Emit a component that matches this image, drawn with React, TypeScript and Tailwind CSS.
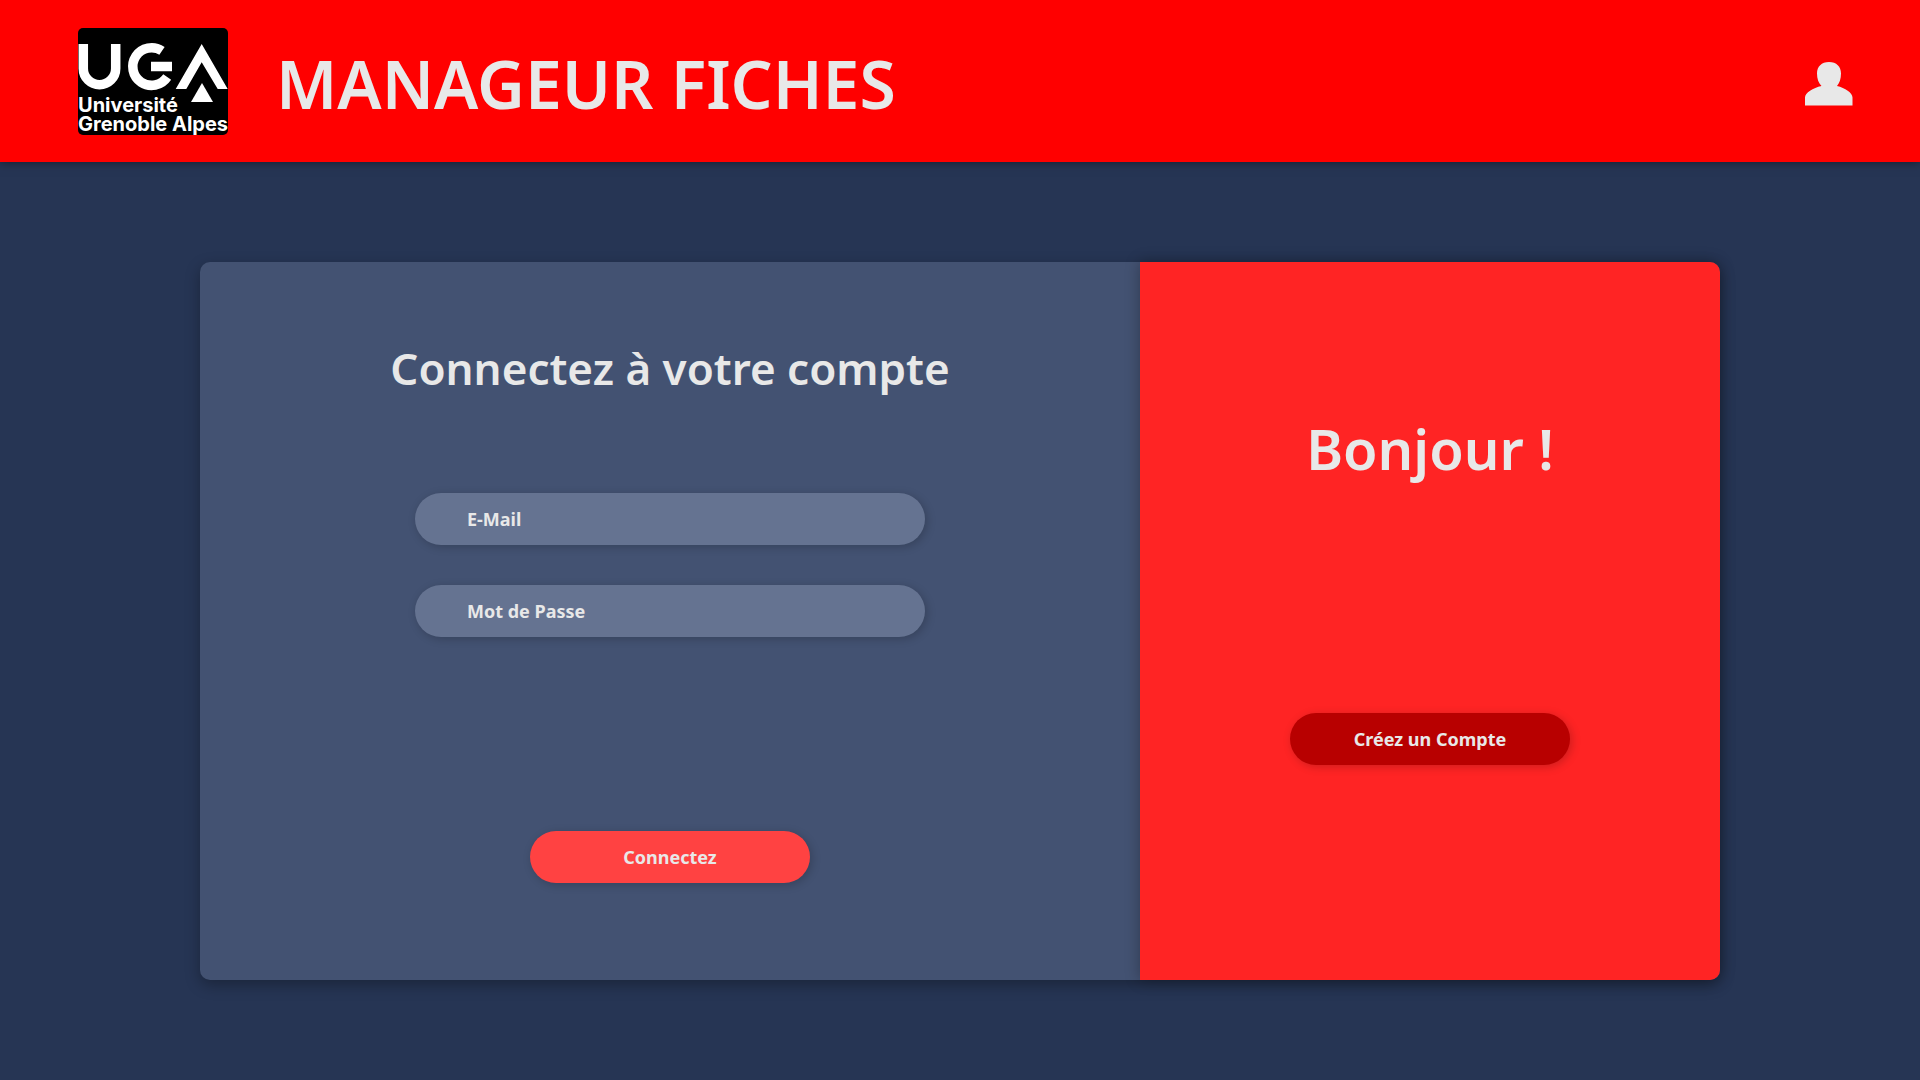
import React from "react";

function UgaLogo() {
  return (
    <svg
      role="img"
      aria-label="Université Grenoble Alpes"
      viewBox="0 0 150 107"
      className="h-[107px] w-[150px] shrink-0 rounded-[5px] bg-black"
    >
      <g fill="none" stroke="#fff" strokeWidth="9.5">
        <path d="M5.3 16V40.5a16.2 16.2 0 0 0 32.4 0V16" />
        <path d="M84 22.9A18.8 18.8 0 1 0 89.2 49" />
        <path d="M73 38.6H94" />
      </g>
      <path fill="#fff" d="M123.7 16L149.7 61H139.7L123.7 34.3L108.3 61H97.7Z" />
      <path fill="#fff" d="M124 55L135 74H113Z" />
      <text fill="#fff" className="font-['Inter'] text-[20px] font-bold">
        <tspan x="0" y="84">Université</tspan>
        <tspan x="0" y="103">Grenoble Alpes</tspan>
      </text>
    </svg>
  );
}

function UserIcon() {
  return (
    <svg viewBox="0 0 48 44" className="h-11 w-12" fill="currentColor" aria-hidden="true">
      <path d="M24 0C31.5 0 36 4.500 36 11.500C36 17 34.500 21 32 24C40 26 47.500 30.500 47.500 35.500V43.500H0V35.500C0 30.500 8 26 16.500 24C13.500 21 12 17 12 11.500C12 4.500 16.500 0 24 0Z" />
    </svg>
  );
}

function Field({ id, label, type }: { id: string; label: string; type: string }) {
  return (
    <input
      id={id}
      type={type}
      aria-label={label}
      placeholder={label}
      className="h-13 w-full rounded-full bg-[#657391] px-13 text-lg font-bold text-[#e8e8e8] shadow-[2px_2px_10px_rgba(0,0,0,0.2)] outline-none placeholder:text-[#e8e8e8]"
    />
  );
}

export default function App() {
  return (
    <div className="flex min-h-screen flex-col bg-[#263554] font-['Noto_Sans',sans-serif] text-[#e8e8e8]">
      <header className="flex items-center bg-[#ff0000] pt-7 pr-[67px] pb-[27px] pl-[78px] shadow-[0_0_10px_rgba(0,0,0,0.5)]">
        <UgaLogo />
        <h1 className="ml-12 pt-0.5 text-[66px] leading-[72px] font-semibold">MANAGEUR FICHES</h1>
        <button type="button" aria-label="Mon compte" className="ml-auto pt-1">
          <UserIcon />
        </button>
      </header>

      <main className="mx-[200px] my-[100px] flex flex-1 rounded-[10px] bg-[#435272] shadow-[0_5px_15px_rgba(0,0,0,0.3)]">
        <form className="flex flex-[47] flex-col items-center pt-[78px] pb-[97px]">
          <h2 className="text-[44px] leading-[56px] font-semibold">Connectez à votre compte</h2>
          <div className="mt-[97px] flex w-[510px] flex-col gap-10">
            <Field id="email" label="E-Mail" type="email" />
            <Field id="password" label="Mot de Passe" type="password" />
          </div>
          <button
            type="button"
            className="mt-auto h-13 w-70 rounded-full bg-[#ff4242] text-lg font-bold shadow-[2px_2px_10px_rgba(0,0,0,0.2)]"
          >
            Connectez
          </button>
        </form>

        <section className="flex flex-[29] flex-col items-center rounded-r-[10px] bg-[#ff2424] pt-[150px] pb-[215px] shadow-[0_0_15px_rgba(0,0,0,0.3)]">
          <h2 className="text-[56px] leading-[72px] font-semibold">Bonjour !</h2>
          <button
            type="button"
            className="mt-auto h-13 w-70 rounded-full bg-[#b80000] text-lg font-bold shadow-[2px_2px_10px_rgba(0,0,0,0.2)]"
          >
            Créez un Compte
          </button>
        </section>
      </main>
    </div>
  );
}
